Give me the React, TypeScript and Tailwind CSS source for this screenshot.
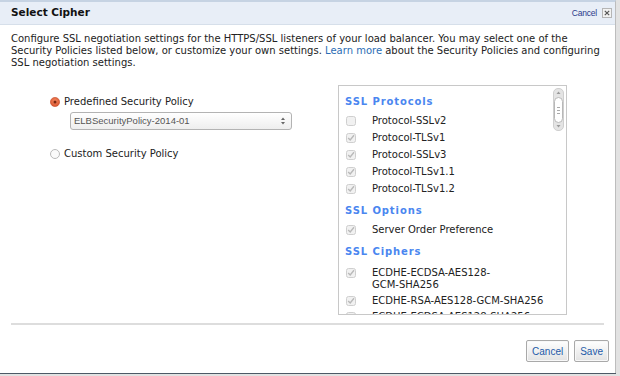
import type { ReactNode } from 'react'

const verdana = "font-['DejaVu_Sans',Verdana,sans-serif]"
const arial = "font-['Liberation_Sans',Arial,sans-serif]"

function CheckMark({ checked }: { checked: boolean }) {
  return (
    <svg width="10" height="10" viewBox="0 0 10 10" aria-hidden className="shrink-0">
      <rect x="0.5" y="0.5" width="9" height="9" rx="2" fill="#f1f1f1" stroke="#cfcfcf" />
      {checked && (
        <path d="M2.2 5 4.2 7 8 2.2" fill="none" stroke="#b9b9b9" strokeWidth="1.4" />
      )}
    </svg>
  )
}

function Row({ checked = true, children }: { checked?: boolean; children: ReactNode }) {
  return (
    <div className="flex items-start gap-[16px] pl-[1px]">
      <div className="pt-[1px]">
        <CheckMark checked={checked} />
      </div>
      <div className="leading-[12px]">{children}</div>
    </div>
  )
}

function SectionTitle({ children }: { children: ReactNode }) {
  return (
    <div className="text-[10px] font-bold tracking-[0.9px] text-[#4a86f0] leading-[12px]">{children}</div>
  )
}

function Radio({ on }: { on?: boolean }) {
  return on ? (
    <svg width="10" height="10" viewBox="0 0 10 10" aria-hidden>
      <defs>
        <radialGradient id="rg" cx="50%" cy="40%" r="60%">
          <stop offset="0" stopColor="#f48a63" />
          <stop offset="1" stopColor="#d9532c" />
        </radialGradient>
      </defs>
      <circle cx="5" cy="5" r="4.6" fill="url(#rg)" stroke="#c44a26" strokeWidth="0.6" />
      <circle cx="5" cy="5" r="1.5" fill="#7a2610" />
    </svg>
  ) : (
    <svg width="10" height="10" viewBox="0 0 10 10" aria-hidden>
      <circle cx="5" cy="5" r="4.5" fill="#fafafa" stroke="#b9b9b9" />
    </svg>
  )
}

function Scrollbar() {
  return (
    <div className="flex w-[11px] flex-col items-center rounded-[5px] border border-[#cfcfcf] bg-[#e4e4e4] py-[1px]">
      <svg width="7" height="6" viewBox="0 0 7 6" aria-hidden>
        <path d="M1.5 4 3.5 1.5 5.5 4Z" fill="#9a9a9a" />
      </svg>
      <div className="mt-[1px] flex h-[26px] w-[9px] flex-col items-center justify-center gap-[2px] rounded-[5px] border border-[#b8b8b8] bg-white">
        <div className="h-px w-[3px] bg-[#aaa]" />
        <div className="h-px w-[3px] bg-[#aaa]" />
        <div className="h-px w-[3px] bg-[#aaa]" />
      </div>
      <div className="flex-1" />
      <svg width="7" height="6" viewBox="0 0 7 6" aria-hidden>
        <path d="M1.5 2 3.5 4.5 5.5 2Z" fill="#9a9a9a" />
      </svg>
    </div>
  )
}

function Button({ children }: { children: ReactNode }) {
  return (
    <button
      type="button"
      className={`${arial} h-[22px] rounded-[2px] border border-[#a9a9a9] bg-gradient-to-b from-white to-[#e3e3e3] px-[5px] text-[10px] text-[#1d5aa8] shadow-[inset_0_0_0_1px_#f8f8f8]`}
    >
      {children}
    </button>
  )
}

export default function App() {
  return (
    <div className="h-[376px] w-[620px] overflow-hidden bg-[#e2e2e2]">
      <div className="flex h-[373px] w-[616px] flex-col border-t-2 border-r border-[#c6d3e3] border-r-[#bdbdbd] bg-white shadow-[0_1px_0_#4d5966]">
        <div className="flex h-[23px] items-center justify-between border-b border-[#d6dfea] bg-[#e8eef7] pl-[11px] pr-[3px]">
          <div className={`${verdana} text-[10.5px] font-bold text-[#111]`}>Select Cipher</div>
          <div className="flex items-center gap-[5px]">
            <span className={`${arial} text-[8.5px] tracking-[-0.2px] text-[#2b3a8c]`}>Cancel</span>
            <span className="flex h-[10px] w-[10px] items-center justify-center border border-[#b5b5b5] bg-[#f2f2f2]">
              <svg width="6" height="6" viewBox="0 0 6 6" aria-hidden>
                <path d="M0.8 0.8 5.2 5.2M5.2 0.8 0.8 5.2" stroke="#555" strokeWidth="1.2" />
              </svg>
            </span>
          </div>
        </div>

        <p className={`${verdana} mt-[8px] whitespace-nowrap px-[11px] text-[10px] leading-[12px] text-[#222]`}>
          Configure SSL negotiation settings for the HTTPS/SSL listeners of your load balancer. You may select one of the
          <br />
          Security Policies listed below, or customize your own settings.{' '}
          <span className="text-[#2b6db5]">Learn more</span> about the Security Policies and configuring
          <br />
          SSL negotiation settings.
        </p>

        <div className={`${verdana} mt-[16px] flex text-[10px] text-[#222]`}>
          <div className="w-[338px] pl-[50px] pt-[9px]">
            <div className="flex items-center gap-[4px]">
              <Radio on />
              <span>Predefined Security Policy</span>
            </div>
            <div
              className={`${arial} ml-[20px] mt-[3px] flex h-[18px] w-[222px] items-center justify-between rounded-[3px] border border-[#b3b3b3] bg-gradient-to-b from-white to-[#eeeeee] pl-[3px] pr-[5px] text-[9.5px] text-[#555]`}
            >
              <span>ELBSecurityPolicy-2014-01</span>
              <svg width="6" height="10" viewBox="0 0 6 10" aria-hidden>
                <path d="M1 4 3 1.5 5 4Z M1 6 3 8.5 5 6Z" fill="#666" />
              </svg>
            </div>
            <div className="mt-[16px] flex items-center gap-[4px]">
              <Radio />
              <span>Custom Security Policy</span>
            </div>
          </div>

          <div className="flex h-[230px] w-[229px] gap-[1px] border border-[#c8c8c8] p-[2px] pb-0">
            <div className="flex-1 overflow-hidden pl-[4px] pt-[8px]">
              <SectionTitle>SSL Protocols</SectionTitle>
              <div className="mt-[7px] flex flex-col gap-[5px]">
                <Row checked={false}>Protocol-SSLv2</Row>
                <Row>Protocol-TLSv1</Row>
                <Row>Protocol-SSLv3</Row>
                <Row>Protocol-TLSv1.1</Row>
                <Row>Protocol-TLSv1.2</Row>
              </div>
              <div className="mt-[10px]">
                <SectionTitle>SSL Options</SectionTitle>
              </div>
              <div className="mt-[7px]">
                <Row>Server Order Preference</Row>
              </div>
              <div className="mt-[10px]">
                <SectionTitle>SSL Ciphers</SectionTitle>
              </div>
              <div className="mt-[9px] flex flex-col gap-[4px]">
                <Row>
                  ECDHE-ECDSA-AES128-
                  <br />
                  GCM-SHA256
                </Row>
                <Row>ECDHE-RSA-AES128-GCM-SHA256</Row>
                <Row>ECDHE-ECDSA-AES128-SHA256</Row>
              </div>
            </div>
            <div className="pb-[2px]">
              <Scrollbar />
            </div>
          </div>
        </div>

        <div className="mx-[11px] mt-[8px] h-[2px] bg-[#dddddd]" />

        <div className="mt-[15px] flex justify-end gap-[5px] pr-[6px]">
          <Button>Cancel</Button>
          <Button>Save</Button>
        </div>
      </div>
    </div>
  )
}
